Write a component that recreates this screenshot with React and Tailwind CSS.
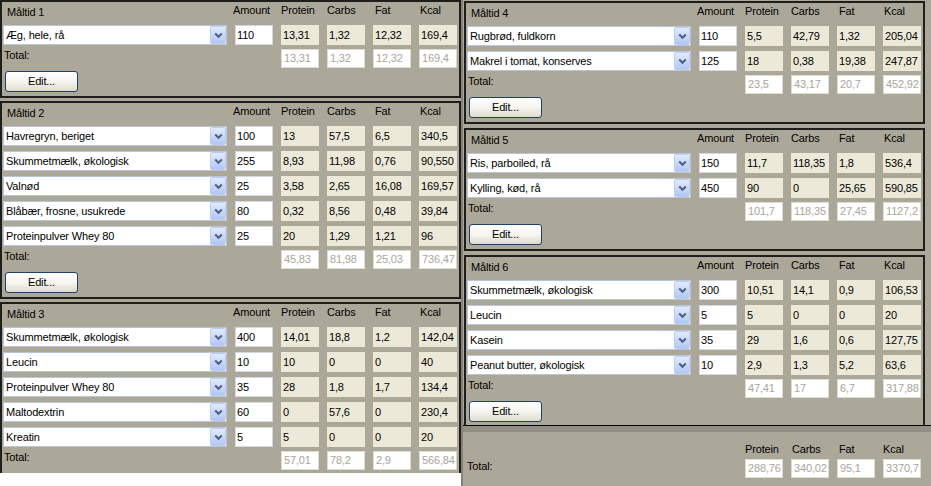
const font = "font-['Liberation_Sans',Arial,sans-serif] text-[11px] leading-[13px] tracking-[-0.15px]";

const meals = [
  {
    title: 'Måltid 1',
    rows: [['Æg, hele, rå', '110', '13,31', '1,32', '12,32', '169,4']],
    total: ['13,31', '1,32', '12,32', '169,4'],
  },
  {
    title: 'Måltid 2',
    rows: [
      ['Havregryn, beriget', '100', '13', '57,5', '6,5', '340,5'],
      ['Skummetmælk, økologisk', '255', '8,93', '11,98', '0,76', '90,550'],
      ['Valnød', '25', '3,58', '2,65', '16,08', '169,57'],
      ['Blåbær, frosne, usukrede', '80', '0,32', '8,56', '0,48', '39,84'],
      ['Proteinpulver Whey 80', '25', '20', '1,29', '1,21', '96'],
    ],
    total: ['45,83', '81,98', '25,03', '736,47'],
  },
  {
    title: 'Måltid 3',
    rows: [
      ['Skummetmælk, økologisk', '400', '14,01', '18,8', '1,2', '142,04'],
      ['Leucin', '10', '10', '0', '0', '40'],
      ['Proteinpulver Whey 80', '35', '28', '1,8', '1,7', '134,4'],
      ['Maltodextrin', '60', '0', '57,6', '0', '230,4'],
      ['Kreatin', '5', '5', '0', '0', '20'],
    ],
    total: ['57,01', '78,2', '2,9', '566,84'],
  },
];

const meals2 = [
  {
    title: 'Måltid 4',
    rows: [
      ['Rugbrød, fuldkorn', '110', '5,5', '42,79', '1,32', '205,04'],
      ['Makrel i tomat, konserves', '125', '18', '0,38', '19,38', '247,87'],
    ],
    total: ['23,5', '43,17', '20,7', '452,92'],
  },
  {
    title: 'Måltid 5',
    rows: [
      ['Ris, parboiled, rå', '150', '11,7', '118,35', '1,8', '536,4'],
      ['Kylling, kød, rå', '450', '90', '0', '25,65', '590,85'],
    ],
    total: ['101,7', '118,35', '27,45', '1127,2'],
  },
  {
    title: 'Måltid 6',
    rows: [
      ['Skummetmælk, økologisk', '300', '10,51', '14,1', '0,9', '106,53'],
      ['Leucin', '5', '5', '0', '0', '20'],
      ['Kasein', '35', '29', '1,6', '0,6', '127,75'],
      ['Peanut butter, økologisk', '10', '2,9', '1,3', '5,2', '63,6'],
    ],
    total: ['47,41', '17', '6,7', '317,88'],
  },
];

const Chevron = () => (
  <svg width="9" height="7" viewBox="0 0 9 7">
    <path d="M1.2 1.5 L4.5 4.8 L7.8 1.5" stroke="#4d6185" strokeWidth="2" fill="none" />
  </svg>
);

const Combo = ({ value }) => (
  <div className="flex h-[20px] w-[224px] items-center border border-[#b9c6d8] bg-white">
    <span className="flex-1 truncate pl-[2px] text-black">{value}</span>
    <div className="mr-[0px] flex h-[18px] w-[16px] items-center justify-center rounded-[2px] border border-[#bccdf3] bg-gradient-to-b from-[#e3ebfe] to-[#b3c7f5]">
      <Chevron />
    </div>
  </div>
);

const Cell = ({ value }) => (
  <div className="flex h-[20px] w-[38px] items-center bg-[#ece9d8] pl-[2px] text-black">{value}</div>
);

const TotalCell = ({ value }) => (
  <div className="flex h-[19px] w-[38px] items-center border border-[#dedbd2] bg-white pl-[2px] text-[#a9a69c]">{value}</div>
);

const Panel = ({ meal }) => (
  <div className="w-[461px] shrink-0 border-2 border-[#1e1e1c] pb-[4px]">
    {/* Header */}
    <div className="flex h-[23px] text-black">
      <span className="w-[231px] pl-[5px] pt-[4px]">{meal.title}</span>
      <span className="w-[48px] pt-[2px]">Amount</span>
      <span className="w-[46px] pt-[2px]">Protein</span>
      <span className="w-[48px] pt-[2px]">Carbs</span>
      <span className="w-[45px] pt-[2px]">Fat</span>
      <span className="pt-[2px]">Kcal</span>
    </div>

    <div className="flex flex-col gap-[5px] pl-[1px]">
      {meal.rows.map((r, i) => (
        <div key={i} className="flex gap-[8px]">
          <Combo value={r[0]} />
          <div className="flex h-[20px] w-[38px] items-center border border-[#d3d9e2] bg-white pl-[1px] text-black">{r[1]}</div>
          {r.slice(2).map((v, j) => (
            <Cell key={j} value={v} />
          ))}
        </div>
      ))}
    </div>

    {/* Total row */}
    <div className="mt-[4px] flex pl-[1px]">
      <span className="w-[278px] pl-[1px] text-black">Total:</span>
      <div className="flex gap-[8px]">
        {meal.total.map((v, j) => (
          <TotalCell key={j} value={v} />
        ))}
      </div>
    </div>

    <button className="ml-[3px] mt-[3px] flex h-[21px] w-[73px] items-center justify-center rounded-[3px] border border-[#1f3f66] bg-gradient-to-b from-white via-[#f6f5f0] to-[#dedacb] text-black">
      Edit...
    </button>
  </div>
);

export default function App() {
  return (
    <div className={`flex h-[486px] w-[931px] overflow-hidden bg-[#aca899] ${font}`}>
      {/* Left scroll area */}
      <div className="flex h-full w-[461px] shrink-0 flex-col bg-white">
        <div className="flex h-[473px] flex-col gap-[3px] overflow-hidden bg-[#aca899]">
          {meals.map((m) => (
            <Panel key={m.title} meal={m} />
          ))}
        </div>
      </div>

      {/* Right side */}
      <div className="flex h-full flex-1 flex-col border-l-2 border-[#85827a]">
        <div className="flex h-[426px] flex-col gap-[4px] border-b border-black pl-[1px] pt-[1px]">
          {meals2.map((m) => (
            <Panel key={m.title} meal={m} />
          ))}
        </div>
        <div className="h-[6px] bg-[#929085]" />

        {/* Grand total */}
        <div className="flex flex-1 flex-col">
          <div className="mt-[11px] flex h-[14px] text-black">
            <span className="w-[282px]" />
            <span className="w-[47px]">Protein</span>
            <span className="w-[47px]">Carbs</span>
            <span className="w-[44px]">Fat</span>
            <span>Kcal</span>
          </div>
          <div className="mt-[2px] flex">
            <span className="w-[282px] pl-[4px] pt-[1px] text-black">Total:</span>
            <div className="flex gap-[8px]">
              {['288,76', '340,02', '95,1', '3370,7'].map((v) => (
                <TotalCell key={v} value={v} />
              ))}
            </div>
          </div>
        </div>
      </div>
    </div>
  );
}
